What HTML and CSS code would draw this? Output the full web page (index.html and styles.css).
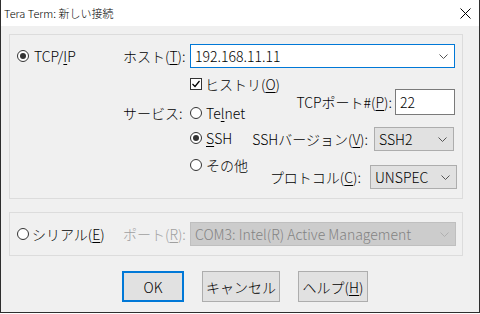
FILE: index.html
```html
<!DOCTYPE html>
<html lang="ja">
<head>
  <meta charset="UTF-8">
  <title>Tera Term: 新しい接続</title>
  <link rel="stylesheet" href="styles.css">
</head>
<body>

<div class="window">
  <div class="titlebar">
    <span class="title">Tera Term: 新しい接続</span>
    <svg class="close" width="11" height="11" viewBox="0 0 11 11">
      <path d="M0.5 0.5 L10.5 10.5 M10.5 0.5 L0.5 10.5" stroke="#000" stroke-width="1" fill="none"/>
    </svg>
  </div>

  <div class="content">
    <div class="group group-tcp">
      <div class="row host-row">
        <div class="col-radio"><span class="radio checked"></span>TCP/<u>I</u>P</div>
        <div class="col-label">ホスト(<u>T</u>):</div>
        <div class="combo combo-host">
          <span>192.168.11.11</span>
          <svg class="chevron" width="9" height="5" viewBox="0 0 9 5"><path d="M0.5 0.5 L4.5 4.5 L8.5 0.5" stroke="#555" fill="none"/></svg>
        </div>
      </div>

      <div class="row lower">
        <div class="col-radio"></div>
        <div class="col-label service-label">サービス:</div>
        <div class="options">
          <div class="opts-left">
            <div class="opt check-row"><span class="checkbox">
              <svg width="10" height="10" viewBox="0 0 10 10"><path d="M1.5 5 L4 7.5 L8.5 2" stroke="#000" stroke-width="1.2" fill="none"/></svg>
            </span>ヒストリ(<u>O</u>)</div>
            <div class="opt opt-telnet"><span class="radio"></span>Te<u>l</u>net</div>
            <div class="opt opt-ssh"><span class="radio checked"></span><u>S</u>SH</div>
            <div class="opt opt-other"><span class="radio"></span>その他</div>
          </div>
          <div class="opts-right">
            <div class="field field-port">
              <span class="field-label">TCPポート#(<u>P</u>):</span>
              <div class="textbox">22</div>
            </div>
            <div class="field field-version">
              <span class="field-label">SSHバージョン(<u>V</u>):</span>
              <div class="select select-version">
                <span>SSH2</span>
                <svg class="chevron" width="9" height="5" viewBox="0 0 9 5"><path d="M0.5 0.5 L4.5 4.5 L8.5 0.5" stroke="#555" fill="none"/></svg>
              </div>
            </div>
            <div class="field field-proto">
              <span class="field-label">プロトコル(<u>C</u>):</span>
              <div class="select select-proto">
                <span>UNSPEC</span>
                <svg class="chevron" width="9" height="5" viewBox="0 0 9 5"><path d="M0.5 0.5 L4.5 4.5 L8.5 0.5" stroke="#555" fill="none"/></svg>
              </div>
            </div>
          </div>
        </div>
      </div>
    </div>

    <div class="group group-serial">
      <div class="row serial-row">
        <div class="col-radio serial-radio"><span class="radio"></span>シリアル(<u>E</u>)</div>
        <div class="col-label disabled">ポート(<u>R</u>):</div>
        <div class="combo combo-disabled">
          <span>COM3: Intel(R) Active Management</span>
          <svg class="chevron" width="9" height="5" viewBox="0 0 9 5"><path d="M0.5 0.5 L4.5 4.5 L8.5 0.5" stroke="#b0b0b0" fill="none"/></svg>
        </div>
      </div>
    </div>

    <div class="buttons">
      <button class="btn btn-ok">OK</button>
      <button class="btn btn-cancel">キャンセル</button>
      <button class="btn btn-help">ヘルプ(<u>H</u>)</button>
    </div>
  </div>
</div>

</body>
</html>
```

FILE: styles.css
```css
* {
  box-sizing: border-box;
}
body {
  margin: 0;
  font-family: 'Noto Sans CJK JP', 'Noto Sans', sans-serif;
  font-size: 14px;
  font-weight: 300;
  color: #000;
  background-color: #fff;
  white-space: nowrap;
}
.window {
  width: 480px;
  height: 313px;
  background-color: #f0f0f0;
  border: 1px solid #2e2e2e;
  border-top: none;
}
.titlebar {
  height: 26px;
  background-color: #fff;
  display: flex;
  align-items: center;
  justify-content: space-between;
  padding: 0 8px 0 3px;
}
.title {
  font-size: 11px;
}
.close {
  margin-top: 1px;
}
.content {
  padding-left: 8px;
}
.group {
  width: 454px;
  border: 1px solid #dcdcdc;
}
.group-tcp {
  margin-top: 8px;
  height: 165px;
}
.group-serial {
  margin-top: 13px;
  height: 44px;
}
.row {
  display: grid;
  grid-template-columns: 112px 68px 272px;
}
.host-row {
  margin-top: 9px;
  height: 24px;
  align-items: center;
}
.col-radio {
  display: flex;
  align-items: center;
  padding-left: 7px;
}
.col-radio .radio {
  margin-right: 5px;
}
.col-label {
  padding-left: 1px;
}
.disabled {
  color: #a0a0a0;
}
u {
  text-decoration-thickness: 1px;
  text-underline-offset: 2px;
}

/* radio / checkbox */
.radio {
  width: 12px;
  height: 12px;
  border: 1px solid #333;
  border-radius: 50%;
  background-color: #fff;
  display: inline-flex;
  align-items: center;
  justify-content: center;
  flex-shrink: 0;
}
.radio.checked::after {
  content: '';
  width: 6px;
  height: 6px;
  border-radius: 50%;
  background-color: #333;
}
.checkbox {
  width: 12px;
  height: 12px;
  border: 1px solid #333;
  background-color: #fff;
  display: inline-flex;
  align-items: center;
  justify-content: center;
  margin-right: 3px;
}

/* combo boxes */
.combo {
  height: 24px;
  border: 1px solid #7a7a7a;
  background-color: #fff;
  display: flex;
  align-items: center;
  justify-content: space-between;
  padding: 0 6px 0 4px;
}
.combo-host {
  width: 265px;
  border-color: #0078d7;
}
.combo-disabled {
  width: 266px;
  background-color: #cccccc;
  border-color: #bfbfbf;
  color: #838383;
}

/* lower part of TCP/IP group */
.lower {
  height: 120px;
}
.service-label {
  margin-top: 33px;
  height: 24px;
  line-height: 24px;
}
.options {
  display: flex;
  width: 272px;
}
.opts-left {
  display: flex;
  flex-direction: column;
  flex: none;
  width: 50px;
}
.opt {
  height: 24px;
  display: flex;
  align-items: center;
}
.opt .radio {
  margin-right: 4px;
}
.check-row {
  margin-top: 4px;
}
.opt-telnet {
  margin-top: 5px;
}
.opt-ssh {
  margin-top: 1px;
}
.opt-other {
  margin-top: 3px;
}
.opts-right {
  display: flex;
  flex-direction: column;
  align-items: flex-end;
  flex: none;
  width: 218px;
}
.field {
  display: flex;
  align-items: center;
  justify-content: flex-end;
}
.field-port {
  margin-top: 21px;
  margin-right: 3px;
}
.field-port .field-label {
  margin-right: 3px;
}
.field-version {
  margin-top: 12px;
  margin-right: 4px;
}
.field-version .field-label {
  margin-right: 6px;
}
.field-proto {
  margin-top: 14px;
  margin-right: 1px;
}
.field-proto .field-label {
  margin-right: 9px;
}
.textbox {
  flex: none;
  width: 60px;
  height: 26px;
  border: 1px solid #7a7a7a;
  background-color: #fff;
  padding-left: 4px;
  line-height: 24px;
}
.select {
  flex: none;
  height: 24px;
  border: 1px solid #adadad;
  background-color: #e1e1e1;
  display: flex;
  align-items: center;
  justify-content: space-between;
  padding: 0 6px 0 4px;
}
.select-version {
  width: 80px;
}
.select-proto {
  width: 87px;
}

/* serial group */
.serial-row {
  margin-top: 9px;
  align-items: center;
}
.serial-radio {
  padding-left: 7px;
}
.serial-radio .radio {
  margin-right: 3px;
}

/* buttons */
.buttons {
  display: flex;
  gap: 18px;
  margin-top: 15px;
  padding-left: 113px;
}
.btn {
  height: 31px;
  font-family: inherit;
  font-size: 14px;
  font-weight: 300;
  background-color: #e1e1e1;
  border: 1px solid #adadad;
  padding: 0;
  color: #000;
}
.btn-ok {
  width: 62px;
  border: 2px solid #0078d7;
}
.btn-cancel {
  width: 78px;
}
.btn-help {
  width: 70px;
}
```
